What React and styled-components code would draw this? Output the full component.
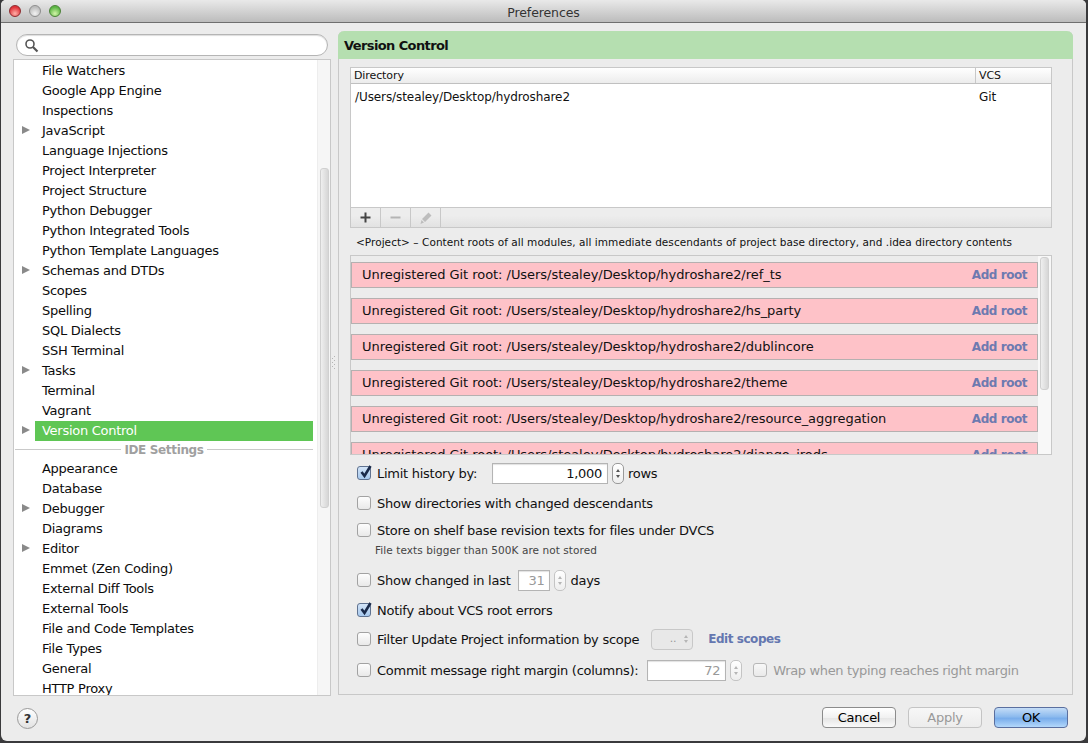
import React from 'react';
import styled, { createGlobalStyle } from 'styled-components';

const FONT = '"DejaVu Sans", "Liberation Sans", sans-serif';

const GlobalStyle = createGlobalStyle`
  html, body {
    margin: 0;
    padding: 0;
    background: #3a3a3c;
    overflow: hidden;
  }
  * { box-sizing: border-box; }
`;

const Page = styled.div`
  width: 1088px;
  height: 743px;
  font-family: ${FONT};
  font-size: 13px;
  letter-spacing: -0.27px;
  color: #111;
`;

const Window = styled.div`
  width: 1085px;
  margin-left: 1px;
  height: 741px;
  background: #ececec;
  border-radius: 5px 5px 6px 6px;
  display: flex;
  flex-direction: column;
  overflow: hidden;
`;

const TitleBar = styled.div`
  height: 23px;
  flex: none;
  display: flex;
  align-items: center;
  gap: 8px;
  padding: 0 0 1px 8px;
  position: relative;
  background: linear-gradient(#e9e9e9, #bcbcbc);
  border-bottom: 1px solid #6f6f6f;
`;

const Light = styled.span`
  width: 12px;
  height: 12px;
  border-radius: 50%;
  border: 1px solid ${p => p.$edge};
  background: radial-gradient(circle at 50% 75%, ${p => p.$glow}, ${p => p.$base} 70%);
`;

const WindowTitle = styled.div`
  position: absolute;
  left: 0;
  right: 0;
  top: 5px;
  text-align: center;
  color: #333;
  font-size: 12.5px;
  letter-spacing: -0.1px;
`;

const Body = styled.div`
  flex: 1;
  display: flex;
  min-height: 0;
  padding: 8px 0 0 12px;
`;

const Sidebar = styled.div`
  width: 318px;
  flex: none;
  display: flex;
  flex-direction: column;
`;

const SearchBox = styled.div`
  height: 22px;
  margin: 3px 4px 3px 3px;
  width: 312px;
  border: 1px solid #b5b5b5;
  border-radius: 11px;
  background: #fff;
  box-shadow: inset 0 1px 1px #ddd;
  display: flex;
  align-items: center;
  padding-left: 7px;
`;

const Tree = styled.div`
  height: 637px;
  border: 1px solid #c8c8c8;
  background: #fff;
  display: flex;
  overflow: hidden;
`;

const TreeList = styled.div`
  flex: 1;
  padding: 1px 4px 0 0;
  min-width: 0;
`;

const TreeRow = styled.div`
  height: 20px;
  line-height: 20px;
  display: flex;
  align-items: center;
  position: relative;
  padding-left: 21px;
  color: ${p => (p.$selected ? '#fff' : '#0c0c0c')};
`;

const Label = styled.span`
  flex: 1;
  height: 20px;
  padding-left: 7px;
  background: ${p => (p.$selected ? '#5fc655' : 'transparent')};
`;

const Arrow = styled.span`
  position: absolute;
  left: 8px;
  top: 5px;
  width: 0;
  height: 0;
  border-left: 8px solid #8a8a8a;
  border-top: 4.5px solid transparent;
  border-bottom: 4.5px solid transparent;
`;

const TreeGroup = styled.div`
  height: 18px;
  display: flex;
  align-items: center;
  gap: 3px;
  padding: 0 0 1px 1px;
  color: #a0a0a0;
  font-weight: bold;
  font-size: 12px;
  letter-spacing: -0.35px;
  &::before, &::after {
    content: '';
    flex: 1;
    height: 1px;
    background: #c9c9c9;
  }
`;

const Gutter = styled.div`
  width: 13px;
  flex: none;
  background: #f6f6f6;
  border-left: 1px solid #ededed;
  padding: 108px 2px 0 2px;
`;

const Thumb = styled.div`
  width: 9px;
  height: ${p => p.$h}px;
  border: 1px solid #d0d0d0;
  border-radius: 3px;
  background: linear-gradient(90deg, #efefef, #d6d6d6);
`;

const HelpRow = styled.div`
  flex: 1;
  display: flex;
  align-items: flex-start;
  padding: 12px 0 0 4px;
`;

const HelpButton = styled.div`
  width: 21px;
  height: 21px;
  border-radius: 50%;
  border: 1px solid #9a9a9a;
  background: linear-gradient(#fff, #e2e2e2);
  text-align: center;
  font-weight: bold;
  font-size: 13px;
  line-height: 19px;
  color: #333;
`;

const Splitter = styled.div`
  width: 7px;
  flex: none;
  display: flex;
  align-items: center;
  padding-left: 1px;
  height: 664px;
`;

const Panel = styled.div`
  width: 735px;
  height: 664px;
  flex: none;
  border: 1px solid #c8c8c8;
  border-top: none;
  border-radius: 6px 6px 0 0;
  display: flex;
  flex-direction: column;
`;

const PanelHeader = styled.div`
  height: 28px;
  flex: none;
  background: #b5dfb0;
  border-radius: 6px 6px 0 0;
  margin: 0 -1px;
  padding-left: 6px;
  line-height: 30px;
  font-weight: bold;
  font-size: 13px;
  letter-spacing: -0.6px;
`;

const Content = styled.div`
  padding: 8px 20px 0 11px;
  flex: 1;
  display: flex;
  flex-direction: column;
`;

const VcsTable = styled.div`
  height: 161px;
  border: 1px solid #c8c8c8;
  background: #fff;
  display: flex;
  flex-direction: column;
`;

const TableHead = styled.div`
  height: 16px;
  flex: none;
  display: flex;
  font-size: 11px;
  line-height: 16px;
  letter-spacing: -0.1px;
  background: linear-gradient(#fff, #ececec);
  border-bottom: 1px solid #c0c0c0;
  padding-left: 3px;
`;

const HeadDir = styled.div`
  width: 622px;
  border-right: 1px solid #c8c8c8;
`;

const HeadVcs = styled.div`
  padding-left: 3px;
`;

const TableRow = styled.div`
  flex: 1;
  display: flex;
  padding: 6px 0 0 4px;
  font-size: 12px;
  letter-spacing: -0.09px;
`;

const RowDir = styled.div`
  width: 624px;
`;

const TableTools = styled.div`
  height: 20px;
  flex: none;
  display: flex;
  border-top: 1px solid #c8c8c8;
  background: linear-gradient(#ededed 40%, #e2e2e2);
`;

const ToolButton = styled.div`
  width: 30px;
  border-right: 1px solid #c8c8c8;
  display: flex;
  align-items: center;
  justify-content: center;
`;

const ToolEnd = styled.div`
  flex: 1;
`;

const Hint = styled.div`
  height: 27px;
  padding-left: 6px;
  line-height: 28px;
  font-size: 10.5px;
  letter-spacing: 0.05px;
  white-space: nowrap;
`;

const RootsBox = styled.div`
  height: 200px;
  border: 1px solid #c8c8c8;
  display: flex;
  overflow: hidden;
`;

const RootsList = styled.div`
  flex: 1;
  padding-top: 6px;
  overflow: hidden;
`;

const RootRow = styled.div`
  height: 26px;
  flex: none;
  margin-bottom: 10px;
  background: #fec2c8;
  border: 1px solid #b5b0b0;
  display: flex;
  align-items: center;
  justify-content: space-between;
  padding: 0 10px 1px 10px;
  letter-spacing: -0.04px;
`;

const AddRoot = styled.span`
  margin-top: 1px;
  color: #6d7ab0;
  font-weight: bold;
  font-size: 12px;
  letter-spacing: -0.45px;
`;

const RootsGutter = styled.div`
  width: 13px;
  flex: none;
  background: #f8f8f8;
  padding: 1px 1px 0 2px;
`;

const Options = styled.div`
  padding: 6px 0 0 7px;
  display: flex;
  flex-direction: column;
`;

const OptionRow = styled.div`
  display: flex;
  align-items: center;
  height: 24px;
  margin-top: ${p => p.$top || 0}px;
`;

const Box = styled.span`
  width: 14px;
  height: 14px;
  flex: none;
  margin-left: ${p => p.$left || 0}px;
  margin-right: 6px;
  border-radius: 3px;
  border: 1px solid ${p => (p.$checked ? '#5f7290' : '#a2a2a2')};
  background: ${p => (p.$checked ? 'linear-gradient(#d3e4f7, #a7c9ee)' : 'linear-gradient(#fdfdfd, #e9e9e9)')};
  opacity: ${p => (p.$muted ? 0.7 : 1)};
  position: relative;
`;

const Tick = styled.svg`
  position: absolute;
  left: 0;
  top: -3px;
  width: 15px;
  height: 15px;
`;

const NumberField = styled.div`
  width: ${p => p.$w}px;
  height: 21px;
  margin-left: ${p => p.$left}px;
  border: 1px solid #b4b4b4;
  background: #fff;
  text-align: right;
  padding-right: 5px;
  line-height: 19px;
  box-shadow: inset 0 1px 1px #e2e2e2;
  color: ${p => (p.$muted ? '#999' : '#111')};
`;

const Stepper = styled.div`
  width: 12px;
  height: 21px;
  margin: 0 4px;
  border: 1px solid ${p => (p.$muted ? '#c4c4c4' : '#9a9a9a')};
  border-radius: 5px;
  background: linear-gradient(#fff, #eee);
  display: flex;
  flex-direction: column;
  align-items: center;
  justify-content: center;
  gap: 3px;
`;

const Caret = styled.span`
  width: 0;
  height: 0;
  border-left: 2.5px solid transparent;
  border-right: 2.5px solid transparent;
  border-${p => (p.$down ? 'top' : 'bottom')}: 3.5px solid ${p => (p.$muted ? '#b5b5b5' : '#555')};
`;

const SubNote = styled.div`
  height: 16px;
  padding-left: 18px;
  font-size: 10.5px;
  letter-spacing: 0.07px;
  color: #444;
  line-height: 16px;
`;

const ScopeSelect = styled.div`
  width: 42px;
  height: 21px;
  margin-left: 12px;
  border: 1px solid #c8c8c8;
  border-radius: 4px;
  background: #e8e8e8;
  display: flex;
  align-items: center;
  justify-content: flex-end;
  gap: 8px;
  padding-right: 4px;
  color: #999;
  font-size: 11px;
  line-height: 14px;
`;

const ScopeCarets = styled.div`
  display: flex;
  flex-direction: column;
  gap: 2px;
`;

const ScopeLink = styled.span`
  margin-left: 15px;
  color: #6477b0;
  font-weight: bold;
  font-size: 12px;
  letter-spacing: -0.45px;
`;

const MutedText = styled.span`
  color: #999;
  letter-spacing: -0.35px;
`;

const Footer = styled.div`
  flex: 1;
  display: flex;
  justify-content: flex-end;
  align-items: flex-start;
  gap: 12px;
  padding: 11px 18px 0 0;
`;

const Button = styled.div`
  width: 74px;
  height: 21px;
  border-radius: 4px;
  border: 1px solid ${p => (p.$primary ? '#5a6f9f' : p.$off ? '#c4c4c4' : '#8c8c8c')};
  background: ${p =>
    p.$primary
      ? 'linear-gradient(#c5ddf7 0%, #8dbbee 45%, #79adeb 55%, #b3d8fb 100%)'
      : p.$off
        ? 'linear-gradient(#f7f7f7, #ececec)'
        : 'linear-gradient(#fff 0%, #f1f1f1 50%, #e6e6e6 55%, #fafafa 100%)'};
  color: ${p => (p.$off ? '#999' : '#000')};
  text-align: center;
  line-height: 19px;
`;

const MainRow = styled.div`
  display: flex;
`;

const BodyStack = styled.div`
  flex: 1;
  display: flex;
  flex-direction: column;
  min-height: 0;
`;

const firstTree = [
  ['File Watchers'], ['Google App Engine'], ['Inspections'], ['JavaScript', 1], ['Language Injections'],
  ['Project Interpreter'], ['Project Structure'], ['Python Debugger'], ['Python Integrated Tools'],
  ['Python Template Languages'], ['Schemas and DTDs', 1], ['Scopes'], ['Spelling'], ['SQL Dialects'],
  ['SSH Terminal'], ['Tasks', 1], ['Terminal'], ['Vagrant'],
];

const secondTree = [
  ['Appearance'], ['Database'], ['Debugger', 1], ['Diagrams'], ['Editor', 1], ['Emmet (Zen Coding)'],
  ['External Diff Tools'], ['External Tools'], ['File and Code Templates'], ['File Types'], ['General'],
  ['HTTP Proxy'],
];

const roots = ['ref_ts', 'hs_party', 'dublincore', 'theme', 'resource_aggregation', 'django_irods'];

const Item = ({ name, arrow, selected }) => (
  <TreeRow $selected={selected}>
    {arrow ? <Arrow /> : null}
    <Label $selected={selected}>{name}</Label>
  </TreeRow>
);

const Check = ({ checked, muted, left }) => (
  <Box $checked={checked} $muted={muted} $left={left}>
    {checked ? (
      <Tick viewBox="0 0 15 15">
        <path d="M3.5 8 L6.5 12 L12.5 2" fill="none" stroke="#1a2a4a" strokeWidth="2.6" />
      </Tick>
    ) : null}
  </Box>
);

const Spin = ({ muted }) => (
  <Stepper $muted={muted}>
    <Caret $muted={muted} />
    <Caret $muted={muted} $down />
  </Stepper>
);

const App = () => {
  return (
    <Page>
      <GlobalStyle />
      <Window>
        <TitleBar>
          <Light $base="#e0333a" $glow="#ffb0a8" $edge="#8e2a2e" />
          <Light $base="#bdbdbd" $glow="#f2f2f2" $edge="#8d8d8d" />
          <Light $base="#5cb544" $glow="#d2f5a8" $edge="#4a8236" />
          <WindowTitle>Preferences</WindowTitle>
        </TitleBar>
        <Body>
          <BodyStack>
            <MainRow>
              <Sidebar>
                <SearchBox>
                  <svg width="15" height="15" viewBox="0 0 15 15">
                    <circle cx="6" cy="6" r="4" fill="none" stroke="#555" strokeWidth="1.6" />
                    <path d="M9 9 L13.5 13.5" stroke="#555" strokeWidth="2.2" />
                  </svg>
                </SearchBox>
                <Tree>
                  <TreeList>
                    {firstTree.map(([name, arrow]) => (
                      <Item key={name} name={name} arrow={arrow} />
                    ))}
                    <Item name="Version Control" arrow selected />
                    <TreeGroup>IDE Settings</TreeGroup>
                    {secondTree.map(([name, arrow]) => (
                      <Item key={name} name={name} arrow={arrow} />
                    ))}
                  </TreeList>
                  <Gutter>
                    <Thumb $h={340} />
                  </Gutter>
                </Tree>
              </Sidebar>
              <Splitter>
                <svg width="4" height="14" viewBox="0 0 4 14" fill="#b4b4b4">
                  <rect x="2" y="0" width="1" height="1" />
                  <rect x="0" y="2" width="1" height="1" />
                  <rect x="2" y="4" width="1" height="1" />
                  <rect x="0" y="6" width="1" height="1" />
                  <rect x="2" y="8" width="1" height="1" />
                  <rect x="0" y="10" width="1" height="1" />
                  <rect x="2" y="12" width="1" height="1" />
                </svg>
              </Splitter>
              <Panel>
                <PanelHeader>Version Control</PanelHeader>
                <Content>
                  <VcsTable>
                    <TableHead>
                      <HeadDir>Directory</HeadDir>
                      <HeadVcs>VCS</HeadVcs>
                    </TableHead>
                    <TableRow>
                      <RowDir>/Users/stealey/Desktop/hydroshare2</RowDir>
                      <span>Git</span>
                    </TableRow>
                    <TableTools>
                      <ToolButton>
                        <svg width="13" height="13" viewBox="0 0 13 13">
                          <path d="M6.5 1.5 V11.5 M1.5 6.5 H11.5" stroke="#444" strokeWidth="2" />
                        </svg>
                      </ToolButton>
                      <ToolButton>
                        <svg width="13" height="13" viewBox="0 0 13 13">
                          <path d="M1.5 6.5 H11.5" stroke="#b4b4b4" strokeWidth="2" />
                        </svg>
                      </ToolButton>
                      <ToolButton>
                        <svg width="14" height="14" viewBox="0 0 14 14">
                          <path d="M9.5 1.5 L12.5 4.5 L6 11 L3 8 Z M2.5 9 L5 11.5 L1.5 13 Z" fill="#bdbdbd" />
                        </svg>
                      </ToolButton>
                      <ToolEnd />
                    </TableTools>
                  </VcsTable>
                  <Hint>
                    &lt;Project&gt; &ndash; Content roots of all modules, all immediate descendants of project base
                    directory, and .idea directory contents
                  </Hint>
                  <RootsBox>
                    <RootsList>
                      {roots.map(root => (
                        <RootRow key={root}>
                          <span>Unregistered Git root: /Users/stealey/Desktop/hydroshare2/{root}</span>
                          <AddRoot>Add root</AddRoot>
                        </RootRow>
                      ))}
                    </RootsList>
                    <RootsGutter>
                      <Thumb $h={133} />
                    </RootsGutter>
                  </RootsBox>
                  <Options>
                    <OptionRow>
                      <Check checked />
                      Limit history by:
                      <NumberField $w={116} $left={15}>1,000</NumberField>
                      <Spin />
                      rows
                    </OptionRow>
                    <OptionRow $top={6}>
                      <Check />
                      Show directories with changed descendants
                    </OptionRow>
                    <OptionRow $top={3}>
                      <Check />
                      Store on shelf base revision texts for files under DVCS
                    </OptionRow>
                    <SubNote>File texts bigger than 500K are not stored</SubNote>
                    <OptionRow $top={10}>
                      <Check />
                      Show changed in last
                      <NumberField $w={32} $left={8} $muted>31</NumberField>
                      <Spin muted />
                      days
                    </OptionRow>
                    <OptionRow $top={6}>
                      <Check checked />
                      Notify about VCS root errors
                    </OptionRow>
                    <OptionRow $top={5}>
                      <Check />
                      Filter Update Project information by scope
                      <ScopeSelect>
                        ..
                        <ScopeCarets>
                          <Caret $muted />
                          <Caret $muted $down />
                        </ScopeCarets>
                      </ScopeSelect>
                      <ScopeLink>Edit scopes</ScopeLink>
                    </OptionRow>
                    <OptionRow $top={7}>
                      <Check />
                      Commit message right margin (columns):
                      <NumberField $w={79} $left={9} $muted>72</NumberField>
                      <Spin muted />
                      <Check muted left={7} />
                      <MutedText>Wrap when typing reaches right margin</MutedText>
                    </OptionRow>
                  </Options>
                </Content>
              </Panel>
            </MainRow>
            <MainRow>
              <HelpRow>
                <HelpButton>?</HelpButton>
              </HelpRow>
              <Footer>
                <Button>Cancel</Button>
                <Button $off>Apply</Button>
                <Button $primary>OK</Button>
              </Footer>
            </MainRow>
          </BodyStack>
        </Body>
      </Window>
    </Page>
  );
};

export default App;
